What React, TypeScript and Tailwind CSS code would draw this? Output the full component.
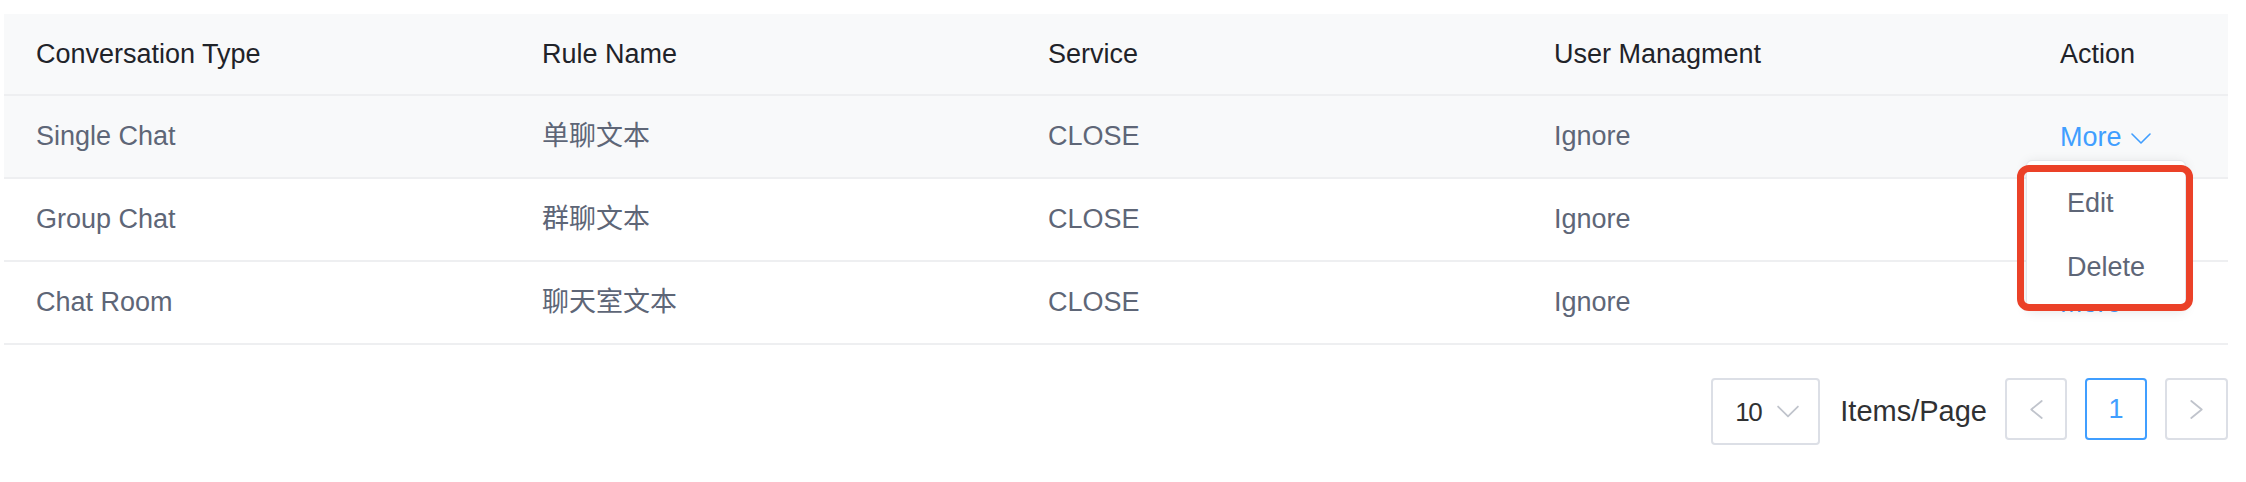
import React from "react";

const font = { fontFamily: '"Liberation Sans", "Noto Sans CJK SC", Arial, sans-serif' };

const rows = [
  { type: "Single Chat", rule: "单聊文本", service: "CLOSE", user: "Ignore" },
  { type: "Group Chat", rule: "群聊文本", service: "CLOSE", user: "Ignore" },
  { type: "Chat Room", rule: "聊天室文本", service: "CLOSE", user: "Ignore" },
];

function ChevronDown({ className }: { className?: string }) {
  return (
    <svg viewBox="0 0 20 11" className={className} fill="none" stroke="currentColor" strokeWidth="1.6" strokeLinecap="round" strokeLinejoin="round">
      <polyline points="1,1 10,10 19,1" />
    </svg>
  );
}

function ChevronLeft({ className }: { className?: string }) {
  return (
    <svg viewBox="0 0 13 20" className={className} fill="none" stroke="currentColor" strokeWidth="1.9" strokeLinecap="round" strokeLinejoin="round">
      <polyline points="12,1 1,10 12,19" />
    </svg>
  );
}

function ChevronRight({ className }: { className?: string }) {
  return (
    <svg viewBox="0 0 13 20" className={className} fill="none" stroke="currentColor" strokeWidth="1.9" strokeLinecap="round" strokeLinejoin="round">
      <polyline points="1,1 12,10 1,19" />
    </svg>
  );
}

export default function App() {
  return (
    <div className="w-[2246px] h-[482px] bg-white overflow-hidden text-[27px] leading-none" style={font}>
      <div className="relative ml-[4px] mt-[14px] w-[2224px]">
        {/* header */}
        <div className="grid grid-cols-[506px_506px_506px_506px_1fr] h-[82px] bg-[#f8f9fa] border-b-2 border-[#eeeff1] text-[#1f2329]">
          {["Conversation Type", "Rule Name", "Service", "User Managment", "Action"].map((h) => (
            <div key={h} className="flex items-center pl-[32px]">{h}</div>
          ))}
        </div>
        {rows.map((r, i) => (
          <div
            key={r.type}
            className={`grid grid-cols-[506px_506px_506px_506px_1fr] h-[83px] border-b-2 border-[#eeeff1] text-[#5e6677] ${i === 0 ? "bg-[#f8f9fa]" : "bg-white"}`}
          >
            <div className="flex items-center pl-[32px]">{r.type}</div>
            <div className="flex items-center pl-[32px]">{r.rule}</div>
            <div className="flex items-center pl-[32px]">{r.service}</div>
            <div className="flex items-center pl-[32px]">{r.user}</div>
            <div className="flex items-center pl-[32px] pt-[2px] text-[#409eff] gap-[9px]">
              <span>More</span>
              <ChevronDown className="w-[20px] h-[11px] mt-[2px]" />
            </div>
          </div>
        ))}

        {/* dropdown */}
        <div className="absolute left-[2022px] top-[146px] w-[160px] bg-white border border-[#e4e7ed] rounded-[6px] shadow-[0_2px_12px_rgba(0,0,0,0.1)] py-[10px] text-[#5e6677]">
          <div className="h-[64px] flex items-center pl-[40px]">Edit</div>
          <div className="h-[64px] flex items-center pl-[40px]">Delete</div>
        </div>
        <div className="absolute left-[2013px] top-[151px] w-[176px] h-[146px] border-[7px] border-[#eb4128] rounded-[12px]" />

        {/* pagination */}
        <div className="flex justify-end items-start mt-[33px] text-[#303133]">
          <div className="w-[109px] h-[67px] border-2 border-[#dcdfe6] rounded-[4px] flex items-center pl-[22px]">
            <span className="text-[26px] tracking-[-1.5px]">10</span>
            <ChevronDown className="w-[22px] h-[13px] ml-[16px] text-[#c0c4cc]" />
          </div>
          <div className="h-[67px] flex items-center ml-[20px] mr-[18px] text-[29px]">Items/Page</div>
          <div className="w-[62px] h-[62px] border-2 border-[#dcdfe6] rounded-[4px] flex items-center justify-center text-[#c0c4cc]">
            <ChevronLeft className="w-[13px] h-[19px]" />
          </div>
          <div className="w-[62px] h-[62px] ml-[18px] border-2 border-[#409eff] rounded-[4px] flex items-center justify-center text-[#409eff]">
            1
          </div>
          <div className="w-[63px] h-[62px] ml-[18px] border-2 border-[#dcdfe6] rounded-[4px] flex items-center justify-center text-[#c0c4cc]">
            <ChevronRight className="w-[13px] h-[19px]" />
          </div>
        </div>
      </div>
    </div>
  );
}
